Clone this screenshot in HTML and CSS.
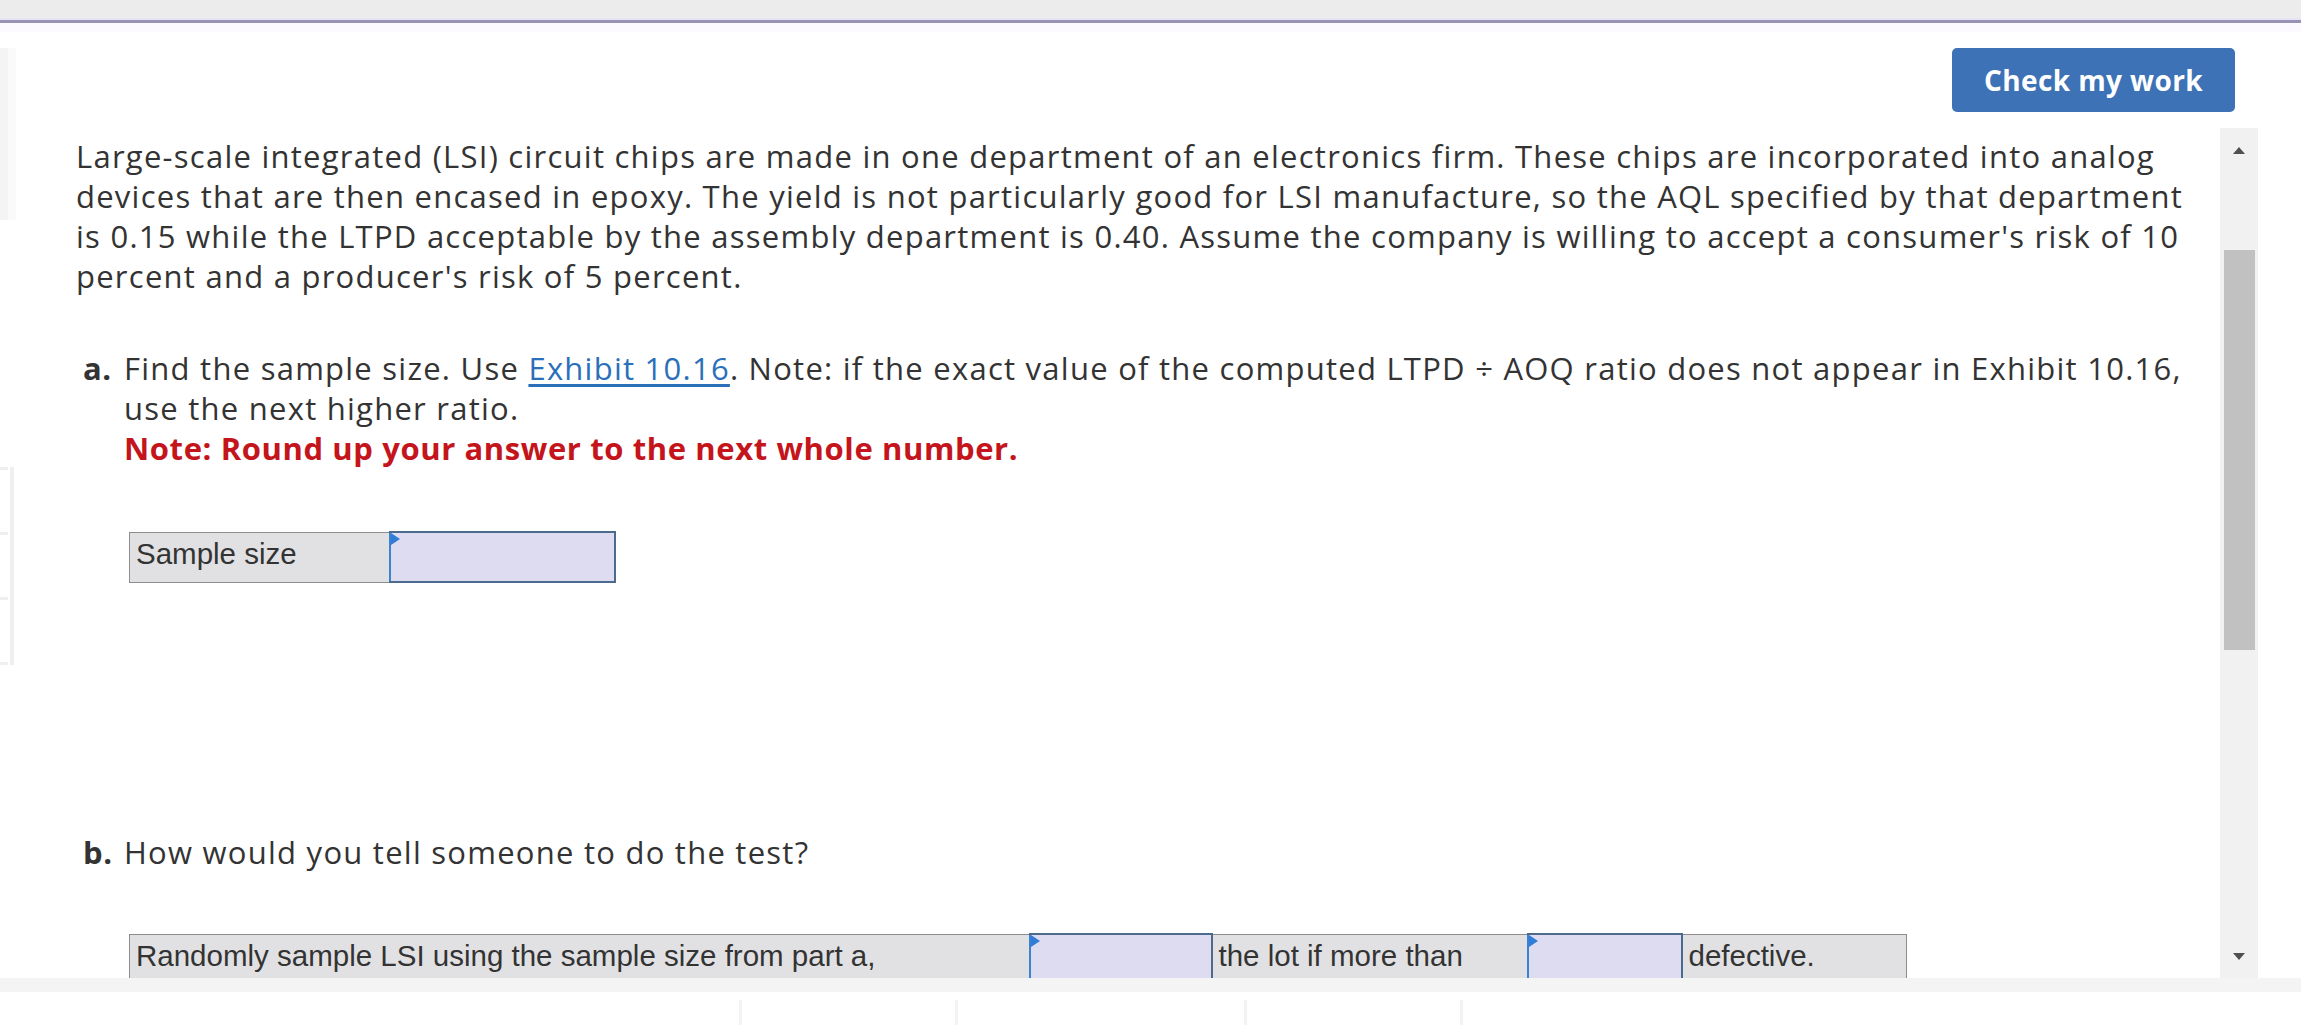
FILE: index.html
```html
<!DOCTYPE html>
<html lang="en">
<head>
    <meta charset="UTF-8">
    <meta name="viewport" content="width=device-width, initial-scale=1.0">
    <title>Question</title>
    <link rel="stylesheet" href="styles.css">
</head>
<body>
    <div class="topbar"></div>

    <div class="page">
        <aside class="side">
            <div class="side-panel"></div>
            <div class="side-list">
                <span></span>
                <span></span>
                <span></span>
                <span></span>
            </div>
        </aside>

        <main class="main">
            <div class="toolbar">
                <button class="check-btn">Check my work</button>
            </div>

            <div class="scroller">
                <div class="content">
                    <p class="intro">Large-scale integrated (LSI) circuit chips are made in one department of an electronics firm. These chips are incorporated into analog devices that are then encased in epoxy. The yield is not particularly good for LSI manufacture, so the AQL specified by that department is 0.15 while the LTPD acceptable by the assembly department is 0.40. Assume the company is willing to accept a consumer's risk of 10 percent and a producer's risk of 5 percent.</p>

                    <div class="part part-a">
                        <b class="part-label">a.</b>
                        <div class="part-body">
                            <p>Find the sample size. Use <a href="#">Exhibit 10.16</a>. Note: if the exact value of the computed LTPD ÷ AOQ ratio does not appear in Exhibit 10.16, use the next higher ratio.</p>
                            <p class="note">Note: Round up your answer to the next whole number.</p>

                            <table class="answer answer-size">
                                <tr>
                                    <td class="cell-label w-name">Sample size</td>
                                    <td class="cell-input w-size"></td>
                                </tr>
                            </table>
                        </div>
                    </div>

                    <div class="part part-b">
                        <b class="part-label">b.</b>
                        <div class="part-body">
                            <p>How would you tell someone to do the test?</p>

                            <table class="answer answer-test">
                                <tr>
                                    <td class="cell-label w-first">Randomly sample LSI using the sample size from part a,</td>
                                    <td class="cell-input w-action"></td>
                                    <td class="cell-label w-lot">the lot if more than</td>
                                    <td class="cell-input w-count"></td>
                                    <td class="cell-label w-last">defective.</td>
                                </tr>
                            </table>
                        </div>
                    </div>
                </div>

                <div class="scrollbar">
                    <div class="sb-btn"><span class="arrow-up"></span></div>
                    <div class="sb-track"><div class="sb-thumb"></div></div>
                    <div class="sb-btn"><span class="arrow-down"></span></div>
                </div>
            </div>
        </main>
    </div>

    <div class="footer">
        <div class="footer-strip"></div>
        <div class="footer-tabs">
            <span class="tab tab-1"></span>
            <span class="tab tab-2"></span>
            <span class="tab tab-3"></span>
        </div>
    </div>
</body>
</html>
```

FILE: styles.css
```css
body {
    margin: 0;
    width: 2301px;
    height: 1025px;
    overflow: hidden;
    background: #fff;
    font-family: "Open Sans", Arial, sans-serif;
    color: #333;
}

/* top frame */
.topbar {
    height: 18px;
    background: #ececec;
    border-bottom: 2px solid #e7e3f6;
    box-shadow: 0 3px 0 #9893b3;
    margin-bottom: 3px;
}
.page {
    display: flex;
    height: 955px;
    border-top: 9px solid #fdfaff;
    box-sizing: border-box;
}

/* faint left rail */
.side {
    width: 16px;
    flex-shrink: 0;
}
.side-panel {
    margin-top: 16px;
    height: 172px;
    width: 8px;
    background: #f4f4f4;
    border-right: 8px solid #fafafa;
    box-sizing: content-box;
}
.side-list {
    margin-top: 247px;
    height: 198px;
    width: 14px;
    border-right: 4px solid #f0f0f0;
    box-sizing: border-box;
    display: flex;
    flex-direction: column;
    justify-content: space-between;
}
.side-list span {
    display: block;
    width: 8px;
    height: 3px;
    background: #efefef;
}

.main {
    flex: 1;
    display: flex;
    flex-direction: column;
    padding-right: 43px;
}
.toolbar {
    display: flex;
    justify-content: flex-end;
    padding: 16px 23px 16px 0;
}
.check-btn {
    width: 283px;
    height: 64px;
    background: #3d72b6;
    border: none;
    border-radius: 5px;
    color: #fff;
    font-family: "Open Sans", Arial, sans-serif;
    font-size: 28px;
    font-weight: 700;
    letter-spacing: 0.4px;
    cursor: pointer;
}

/* question area */
.scroller {
    display: flex;
    height: 850px;
}
.content {
    flex: 1;
    overflow: hidden;
    padding: 8px 15px 0 60px;
    font-size: 31px;
    letter-spacing: 1.25px;
    line-height: 40px;
}
.content p {
    margin: 0;
}
.intro {
    margin-bottom: 52px !important;
}
.part {
    display: flex;
    padding-left: 7px;
}
.part-label {
    width: 41px;
    flex-shrink: 0;
    letter-spacing: 0.6px;
}
.part-body {
    flex: 1;
}
.part a {
    color: #2a6fba;
    text-decoration: underline;
    text-underline-offset: 4px;
}
.note {
    color: #c4151c;
    font-weight: 700;
    letter-spacing: 0.6px;
}
.part-b {
    margin-top: 249px;
}

/* answer tables */
.answer {
    border-collapse: collapse;
    margin-left: 5px;
    font-family: "Liberation Sans", Arial, sans-serif;
    font-size: 29.5px;
    letter-spacing: 0;
    line-height: 34px;
    color: #333;
}
.answer-size {
    margin-top: 63px;
}
.answer-test {
    margin-top: 61px;
}
.answer td {
    height: 50px;
    padding: 4px 6px 10px;
    box-sizing: border-box;
    vertical-align: top;
    white-space: nowrap;
}
.cell-label {
    background: #e1e1e3;
    border: 1px solid #8d8d8d;
}
.cell-input {
    position: relative;
    background: #dddcf0;
    border: 2px solid #4b6a8e;
    border-left-color: #3b83d2;
}
/* little flag marking an input cell */
.cell-input::before {
    content: "";
    position: absolute;
    left: 0;
    top: 0;
    border-top: 6px solid transparent;
    border-bottom: 6px solid transparent;
    border-left: 9px solid #2f7dd6;
}
.w-name { width: 260px; }
.w-size { width: 225px; }
.w-first { width: 900px; }
.w-action { width: 182px; }
.w-lot { width: 316px; }
.w-count { width: 154px; }
.w-last { width: 225px; }

/* scrollbar */
.scrollbar {
    width: 38px;
    flex-shrink: 0;
    background: #f1f1f1;
    display: flex;
    flex-direction: column;
}
.sb-btn {
    height: 44px;
    display: flex;
    align-items: center;
    justify-content: center;
}
.arrow-up, .arrow-down {
    width: 0;
    height: 0;
    border-left: 6px solid transparent;
    border-right: 6px solid transparent;
}
.arrow-up {
    border-bottom: 7px solid #505050;
}
.arrow-down {
    border-top: 7px solid #505050;
}
.sb-track {
    flex: 1;
    padding: 78px 3px 0 4px;
}
.sb-thumb {
    height: 400px;
    background: #c1c1c1;
}

/* bottom frame */
.footer-strip {
    height: 14px;
    background: #f4f4f4;
}
.footer-tabs {
    display: flex;
    padding-left: 739px;
    margin-top: 8px;
    height: 30px;
}
.tab {
    border-left: 3px solid #f3f3f3;
}
.tab-1 { width: 213px; }
.tab-2 { width: 286px; }
.tab-3 { width: 213px; border-right: 3px solid #f3f3f3; }
```
